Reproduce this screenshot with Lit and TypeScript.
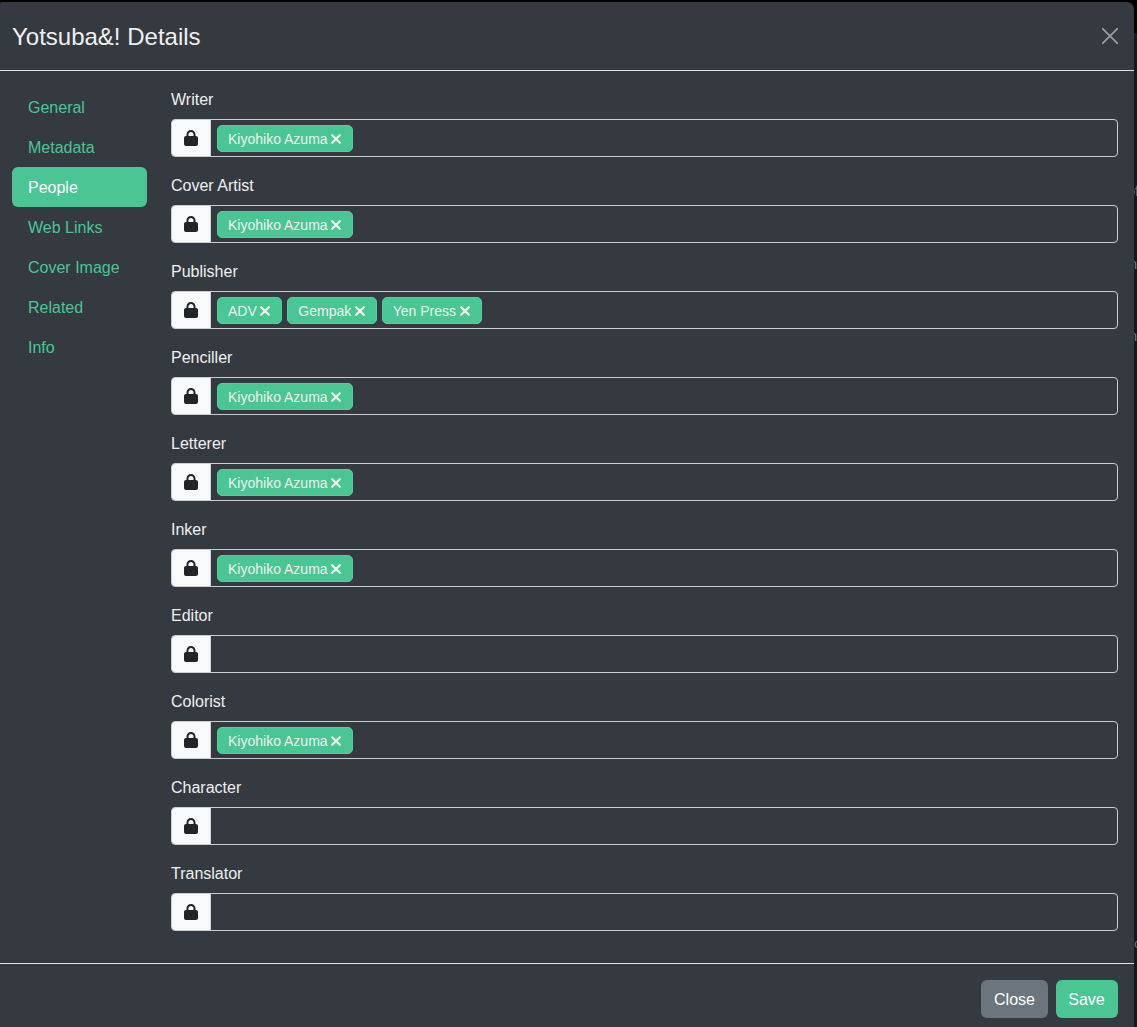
import { LitElement, html, css } from "lit";
import { customElement, property, state } from "lit/decorators.js";
import { classMap } from "lit/directives/class-map.js";

interface Person {
  role: string;
  names: string[];
}

const AUTHOR = "Kiyohiko Azuma";

const TABS = ["General", "Metadata", "People", "Web Links", "Cover Image", "Related", "Info"];

const PEOPLE: Person[] = [
  { role: "Writer", names: [AUTHOR] },
  { role: "Cover Artist", names: [AUTHOR] },
  { role: "Publisher", names: ["ADV", "Gempak", "Yen Press"] },
  { role: "Penciller", names: [AUTHOR] },
  { role: "Letterer", names: [AUTHOR] },
  { role: "Inker", names: [AUTHOR] },
  { role: "Editor", names: [] },
  { role: "Colorist", names: [AUTHOR] },
  { role: "Character", names: [] },
  { role: "Translator", names: [] },
];

@customElement("people-field")
export class PeopleField extends LitElement {
  @property() label = "";
  @property({ attribute: false }) names: string[] = [];

  static styles = css`
    :host {
      display: block;
      margin-bottom: 16px;
    }
    .label {
      display: block;
      padding-top: 1px;
      margin-bottom: 7px;
      line-height: 24px;
    }
    .group {
      display: flex;
      height: 38px;
      box-sizing: border-box;
      border: 1px solid #cccccc;
      border-radius: 4px;
      overflow: hidden;
    }
    .lock {
      display: flex;
      align-items: center;
      justify-content: center;
      width: 38px;
      flex: none;
      background: #f8f9fa;
      border-right: 1px solid #ced4da;
      color: #212529;
    }
    .lock svg {
      width: 14px;
      height: 16px;
      display: block;
    }
    .tags {
      display: flex;
      align-items: center;
      gap: 5px;
      padding-left: 6px;
    }
    .tag {
      display: flex;
      align-items: center;
      gap: 3.5px;
      height: 27px;
      box-sizing: border-box;
      padding: 0 11px 0 10px;
      border: 1px solid #51d09d;
      border-radius: 5px;
      background: #4ac694;
      font-size: 14px;
      white-space: nowrap;
    }
    .tag span {
      padding-top: 1px;
    }
    .tag svg {
      width: 10px;
      height: 10px;
      margin-top: 1px;
      display: block;
    }
  `;

  private remove(name: string) {
    this.names = this.names.filter((n) => n !== name);
  }

  render() {
    return html`
      <span class="label">${this.label}</span>
      <div class="group">
        <div class="lock">
          <svg viewBox="0 0 448 512" fill="currentColor">
            <path
              d="M144 144v48H304V144c0-44.200-35.800-80-80-80s-80 35.800-80 80zM80 192V144C80 64.500 144.500 0 224 0s144 64.500 144 144v48h16c35.300 0 64 28.700 64 64V448c0 35.300-28.700 64-64 64H64c-35.300 0-64-28.700-64-64V256c0-35.300 28.700-64 64-64H80z"
            />
          </svg>
        </div>
        <div class="tags">
          ${this.names.map(
            (name) => html`
              <span class="tag">
                <span>${name}</span>
                <svg viewBox="0 0 10 10" @click=${() => this.remove(name)}>
                  <path d="M1.200 1.200L8.800 8.800M8.800 1.200L1.200 8.800" stroke="currentColor" stroke-width="2.200" stroke-linecap="round" />
                </svg>
              </span>
            `
          )}
        </div>
      </div>
    `;
  }
}

@customElement("app-root")
export class AppRoot extends LitElement {
  @state() private active = "People";

  static styles = css`
    :host {
      display: block;
      position: relative;
      width: 1137px;
      height: 1027px;
      box-sizing: border-box;
      padding-top: 2px;
      overflow: hidden;
      background: linear-gradient(#000 33px, #16191c 33px);
      color: #efefef;
      font-family: "Liberation Sans", Arial, sans-serif;
      font-size: 16px;
      line-height: 24px;
    }
    .dialog {
      position: relative;
      width: 1138px;
      height: 1040px;
      margin-left: -4px;
      box-sizing: border-box;
      border-radius: 7px;
      background: #353a41;
    }
    .header {
      display: flex;
      align-items: center;
      justify-content: space-between;
      height: 69px;
      box-sizing: border-box;
      padding: 0 16px;
      border-bottom: 1px solid #dee2e6;
    }
    .title {
      margin: 0;
      padding-top: 2px;
      font-size: 24px;
      font-weight: 400;
      line-height: 36px;
    }
    .dismiss {
      width: 16px;
      height: 16px;
      color: #9a9ca0;
    }
    .body {
      display: flex;
      gap: 24px;
      height: 892px;
      box-sizing: border-box;
      padding: 16px;
    }
    .nav {
      display: flex;
      flex-direction: column;
      width: 135px;
      flex: none;
    }
    .tab {
      height: 40px;
      box-sizing: border-box;
      padding: 9px 16px 7px;
      border-radius: 6px;
      color: #4ac694;
      cursor: pointer;
    }
    .tab.active {
      background: #4ac694;
      color: #fff;
    }
    .fields {
      flex: 1;
    }
    .footer {
      display: flex;
      justify-content: flex-end;
      gap: 8px;
      padding: 16px;
      border-top: 1px solid #dee2e6;
    }
    .button {
      height: 38px;
      padding: 2px 0 0;
      border: 0;
      border-radius: 6px;
      color: #fff;
      font: inherit;
    }
    .close {
      width: 67px;
      background: #6c757d;
    }
    .save {
      width: 62px;
      padding-right: 1px;
      background: #4ac694;
    }
    .behind {
      position: absolute;
      right: 0;
      color: #77797b;
      font-size: 14px;
      line-height: 16px;
    }
    .b1 { top: 183px; right: -2px; }
    .b2 { top: 256px; }
    .b3 { top: 328px; }
    .b4 { top: 936px; right: -4px; font-size: 12px; }
  `;

  render() {
    return html`
      <span class="behind b1">of</span>
      <span class="behind b2">n</span>
      <span class="behind b3">n</span>
      <span class="behind b4">o</span>
      <div class="dialog">
        <div class="header">
          <h4 class="title">Yotsuba&amp;! Details</h4>
          <svg class="dismiss" viewBox="0 0 16 16" overflow="visible">
            <path d="M0.800 0.800L15.200 15.200M15.200 0.800L0.800 15.200" stroke="currentColor" stroke-width="1.800" stroke-linecap="round" />
          </svg>
        </div>
        <div class="body">
          <div class="nav">
            ${TABS.map(
              (tab) => html`
                <a class=${classMap({ tab: true, active: tab === this.active })} @click=${() => (this.active = tab)}>${tab}</a>
              `
            )}
          </div>
          <div class="fields">
            ${PEOPLE.map((p) => html`<people-field .label=${p.role} .names=${p.names}></people-field>`)}
          </div>
        </div>
        <div class="footer">
          <button class="button close">Close</button>
          <button class="button save">Save</button>
        </div>
      </div>
    `;
  }
}
